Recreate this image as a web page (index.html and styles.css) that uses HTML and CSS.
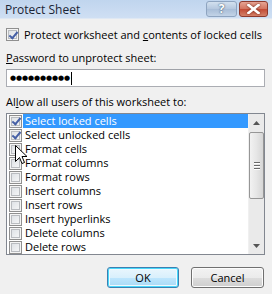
FILE: index.html
```html
<!DOCTYPE html>
<html>
<head>
<meta charset="utf-8">
<link rel="stylesheet" href="styles.css">
</head>
<body>
<div class="dialog">
  <div class="titlebar">
    <span class="title">Protect Sheet</span>
    <span class="tb-btn help">?</span>
    <span class="tb-btn close"><svg width="13" height="10" viewBox="0 0 13 10"><path d="M1.5 1 L11.5 9 M11.5 1 L1.5 9" stroke="#fff" stroke-width="2.6" stroke-linecap="square"/><path d="M1.5 1 L11.5 9 M11.5 1 L1.5 9" stroke="#fff" stroke-width="1.6"/></svg></span>
  </div>
  <div class="content">
    <label class="row top-check"><span class="cb checked"></span><span>Protect worksheet and <u>c</u>ontents of locked cells</span></label>
    <div class="label pw-label"><u>P</u>assword to unprotect sheet:</div>
    <div class="input"><span class="dots">●●●●●●●●●●</span><span class="caret"></span></div>
    <div class="label allow-label">Al<u>l</u>ow all users of this worksheet to:</div>
    <div class="listbox">
      <ul class="items">
        <li class="item selected"><span class="cb checked"></span><span class="txt">Select locked cells</span></li>
        <li class="item"><span class="cb checked"></span><span class="txt">Select unlocked cells</span></li>
        <li class="item"><span class="cb"></span><span class="txt">Format cells</span></li>
        <li class="item"><span class="cb"></span><span class="txt">Format columns</span></li>
        <li class="item"><span class="cb"></span><span class="txt">Format rows</span></li>
        <li class="item"><span class="cb"></span><span class="txt">Insert columns</span></li>
        <li class="item"><span class="cb"></span><span class="txt">Insert rows</span></li>
        <li class="item"><span class="cb"></span><span class="txt">Insert hyperlinks</span></li>
        <li class="item"><span class="cb"></span><span class="txt">Delete columns</span></li>
        <li class="item"><span class="cb"></span><span class="txt">Delete rows</span></li>
      </ul>
      <div class="scrollbar">
        <div class="arrow up"><svg width="7" height="4" viewBox="0 0 7 4"><path d="M0 4 L3.5 0 L7 4 Z" fill="#555"/></svg></div>
        <div class="thumb"><span class="grip"></span><span class="grip"></span><span class="grip"></span></div>
        <div class="track"></div>
        <div class="arrow down"><svg width="7" height="4" viewBox="0 0 7 4"><path d="M0 0 L3.5 4 L7 0 Z" fill="#555"/></svg></div>
      </div>
    </div>
    <div class="buttons">
      <button class="btn default">OK</button>
      <button class="btn">Cancel</button>
    </div>
  </div>
  <svg class="cursor" width="13" height="21" viewBox="0 0 13 21"><path d="M0.5 0.5 L0.5 16.5 L4.5 12.5 L7 18.5 L9.5 17.5 L7 11.5 L12 11.5 Z" fill="#fff" stroke="#000" stroke-width="1" stroke-linejoin="miter"/></svg>
</div>
</body>
</html>
```

FILE: styles.css
```css
* { box-sizing: border-box; }
html, body { margin: 0; padding: 0; }
body {
  width: 272px;
  height: 294px;
  overflow: hidden;
  background: #f0f0f0;
  font-family: "Open Sans", "Noto Sans", sans-serif;
  font-size: 11px;
  color: #000;
  white-space: nowrap;
}
.dialog {
  position: relative;
  width: 272px;
  height: 294px;
  display: flex;
  flex-direction: column;
}
.titlebar {
  height: 19px;
  display: flex;
  align-items: center;
  padding: 0 4px 0 5px;
  background: linear-gradient(#c0d5ee, #cfdff3);
  border-bottom: 1px solid #dfe8f3;
}
.title {
  flex: 1;
  font-size: 12px;
  color: #1b2535;
  line-height: 19px;
}
.tb-btn {
  height: 16px;
  display: flex;
  align-items: center;
  justify-content: center;
  border-radius: 3px;
}
.help {
  width: 31px;
  margin-right: 2px;
  background: linear-gradient(#d3e0ef, #b4c7de 50%, #a8bdd7 51%, #c2d3e7);
  border: 1px solid #8ea4c0;
  color: #fff;
  font-weight: bold;
  font-size: 12px;
  text-shadow: 0 0 2px #4a607c, 0 0 1px #4a607c;
  line-height: 14px;
}
.close {
  width: 29px;
  background: linear-gradient(#e6a494, #d3735f 50%, #c24a35 51%, #d4826a);
  border: 1px solid #8d3a2e;
}
.close svg { filter: drop-shadow(0 0 1px #6e2416); }
.content {
  flex: 1;
  display: flex;
  flex-direction: column;
  padding: 0 7px 0 6px;
}
.row {
  display: flex;
  align-items: center;
  height: 15px;
  line-height: 15px;
}
.top-check { margin-top: 8px; gap: 5px; }
.cb {
  width: 13px;
  height: 13px;
  flex: none;
  border: 1px solid #8f8f8f;
  box-shadow: inset 0 0 0 1px #f4f4f4, inset 0 0 0 2px #b9bcc0;
  background-image: linear-gradient(135deg, #d9dde2, #fafafa);
  position: relative;
}
.cb.checked::after {
  content: "";
  position: absolute;
  left: 3.5px;
  top: 0.5px;
  width: 3px;
  height: 7px;
  border-right: 2px solid #4660a6;
  border-bottom: 2px solid #4660a6;
  transform: rotate(40deg);
}
.label {
  height: 16px;
  line-height: 16px;
}
.pw-label { margin-top: 8px; }
.input {
  margin-top: 3px;
  height: 18px;
  background: #fff;
  border: 1px solid #abadb3;
  border-top-color: #9fa2a8;
  display: flex;
  align-items: center;
  padding-left: 3px;
}
.dots {
  font-family: "DejaVu Sans", sans-serif;
  font-size: 7px;
  letter-spacing: -0.1px;
  line-height: 16px;
}
.caret {
  width: 1px;
  height: 13px;
  background: #000;
  margin-left: 1px;
}
.allow-label { margin-top: 7px; }
.listbox {
  margin-top: 3px;
  height: 142px;
  border: 1px solid #828790;
  background: #fff;
  display: flex;
}
.items {
  list-style: none;
  margin: 0;
  padding: 0;
  flex: 1;
}
.item {
  height: 14px;
  display: flex;
  align-items: center;
  padding-left: 2px;
}
.txt {
  flex: 1;
  height: 14px;
  line-height: 14px;
  margin-left: 1px;
  padding-left: 2px;
}
.item.selected .txt {
  background: #3399ff;
  color: #fff;
}
.scrollbar {
  width: 16px;
  flex: none;
  display: flex;
  flex-direction: column;
  background: #eaeaea;
  border-left: 1px solid #f0f0f0;
}
.arrow {
  height: 17px;
  display: flex;
  align-items: center;
  justify-content: center;
}
.thumb {
  height: 67px;
  margin-top: 1px;
  border: 1px solid #969696;
  border-radius: 2px;
  background: linear-gradient(90deg, #f2f2f2, #e6e6e6 50%, #d6d6d6);
  display: flex;
  flex-direction: column;
  justify-content: center;
  align-items: center;
  gap: 2px;
}
.grip {
  width: 6px;
  height: 1px;
  background: #6a6a6a;
  box-shadow: 0 1px 0 #fff;
}
.track { flex: 1; }
.buttons {
  margin-top: 12px;
  display: flex;
  justify-content: flex-end;
  gap: 12px;
  padding-right: 1px;
}
.btn {
  height: 21px;
  width: 73px;
  font-family: "Open Sans", "Noto Sans", sans-serif;
  font-size: 11px;
  color: #000;
  border: 1px solid #707070;
  border-radius: 3px;
  background: linear-gradient(#f2f2f2, #ebebeb 50%, #dddddd 51%, #cfcfcf);
  box-shadow: inset 0 0 0 1px #fcfcfc;
  padding: 0;
}
.btn.default {
  width: 72px;
  border-color: #3c7fb1;
  box-shadow: inset 0 0 0 1px #48d8fb, inset 0 0 0 2px #f0f8fd;
  background: linear-gradient(#eaf6fd, #d9f0fc 50%, #bee6fd 51%, #a7d9f5);
}
.cursor {
  position: absolute;
  left: 15px;
  top: 145px;
}
```
